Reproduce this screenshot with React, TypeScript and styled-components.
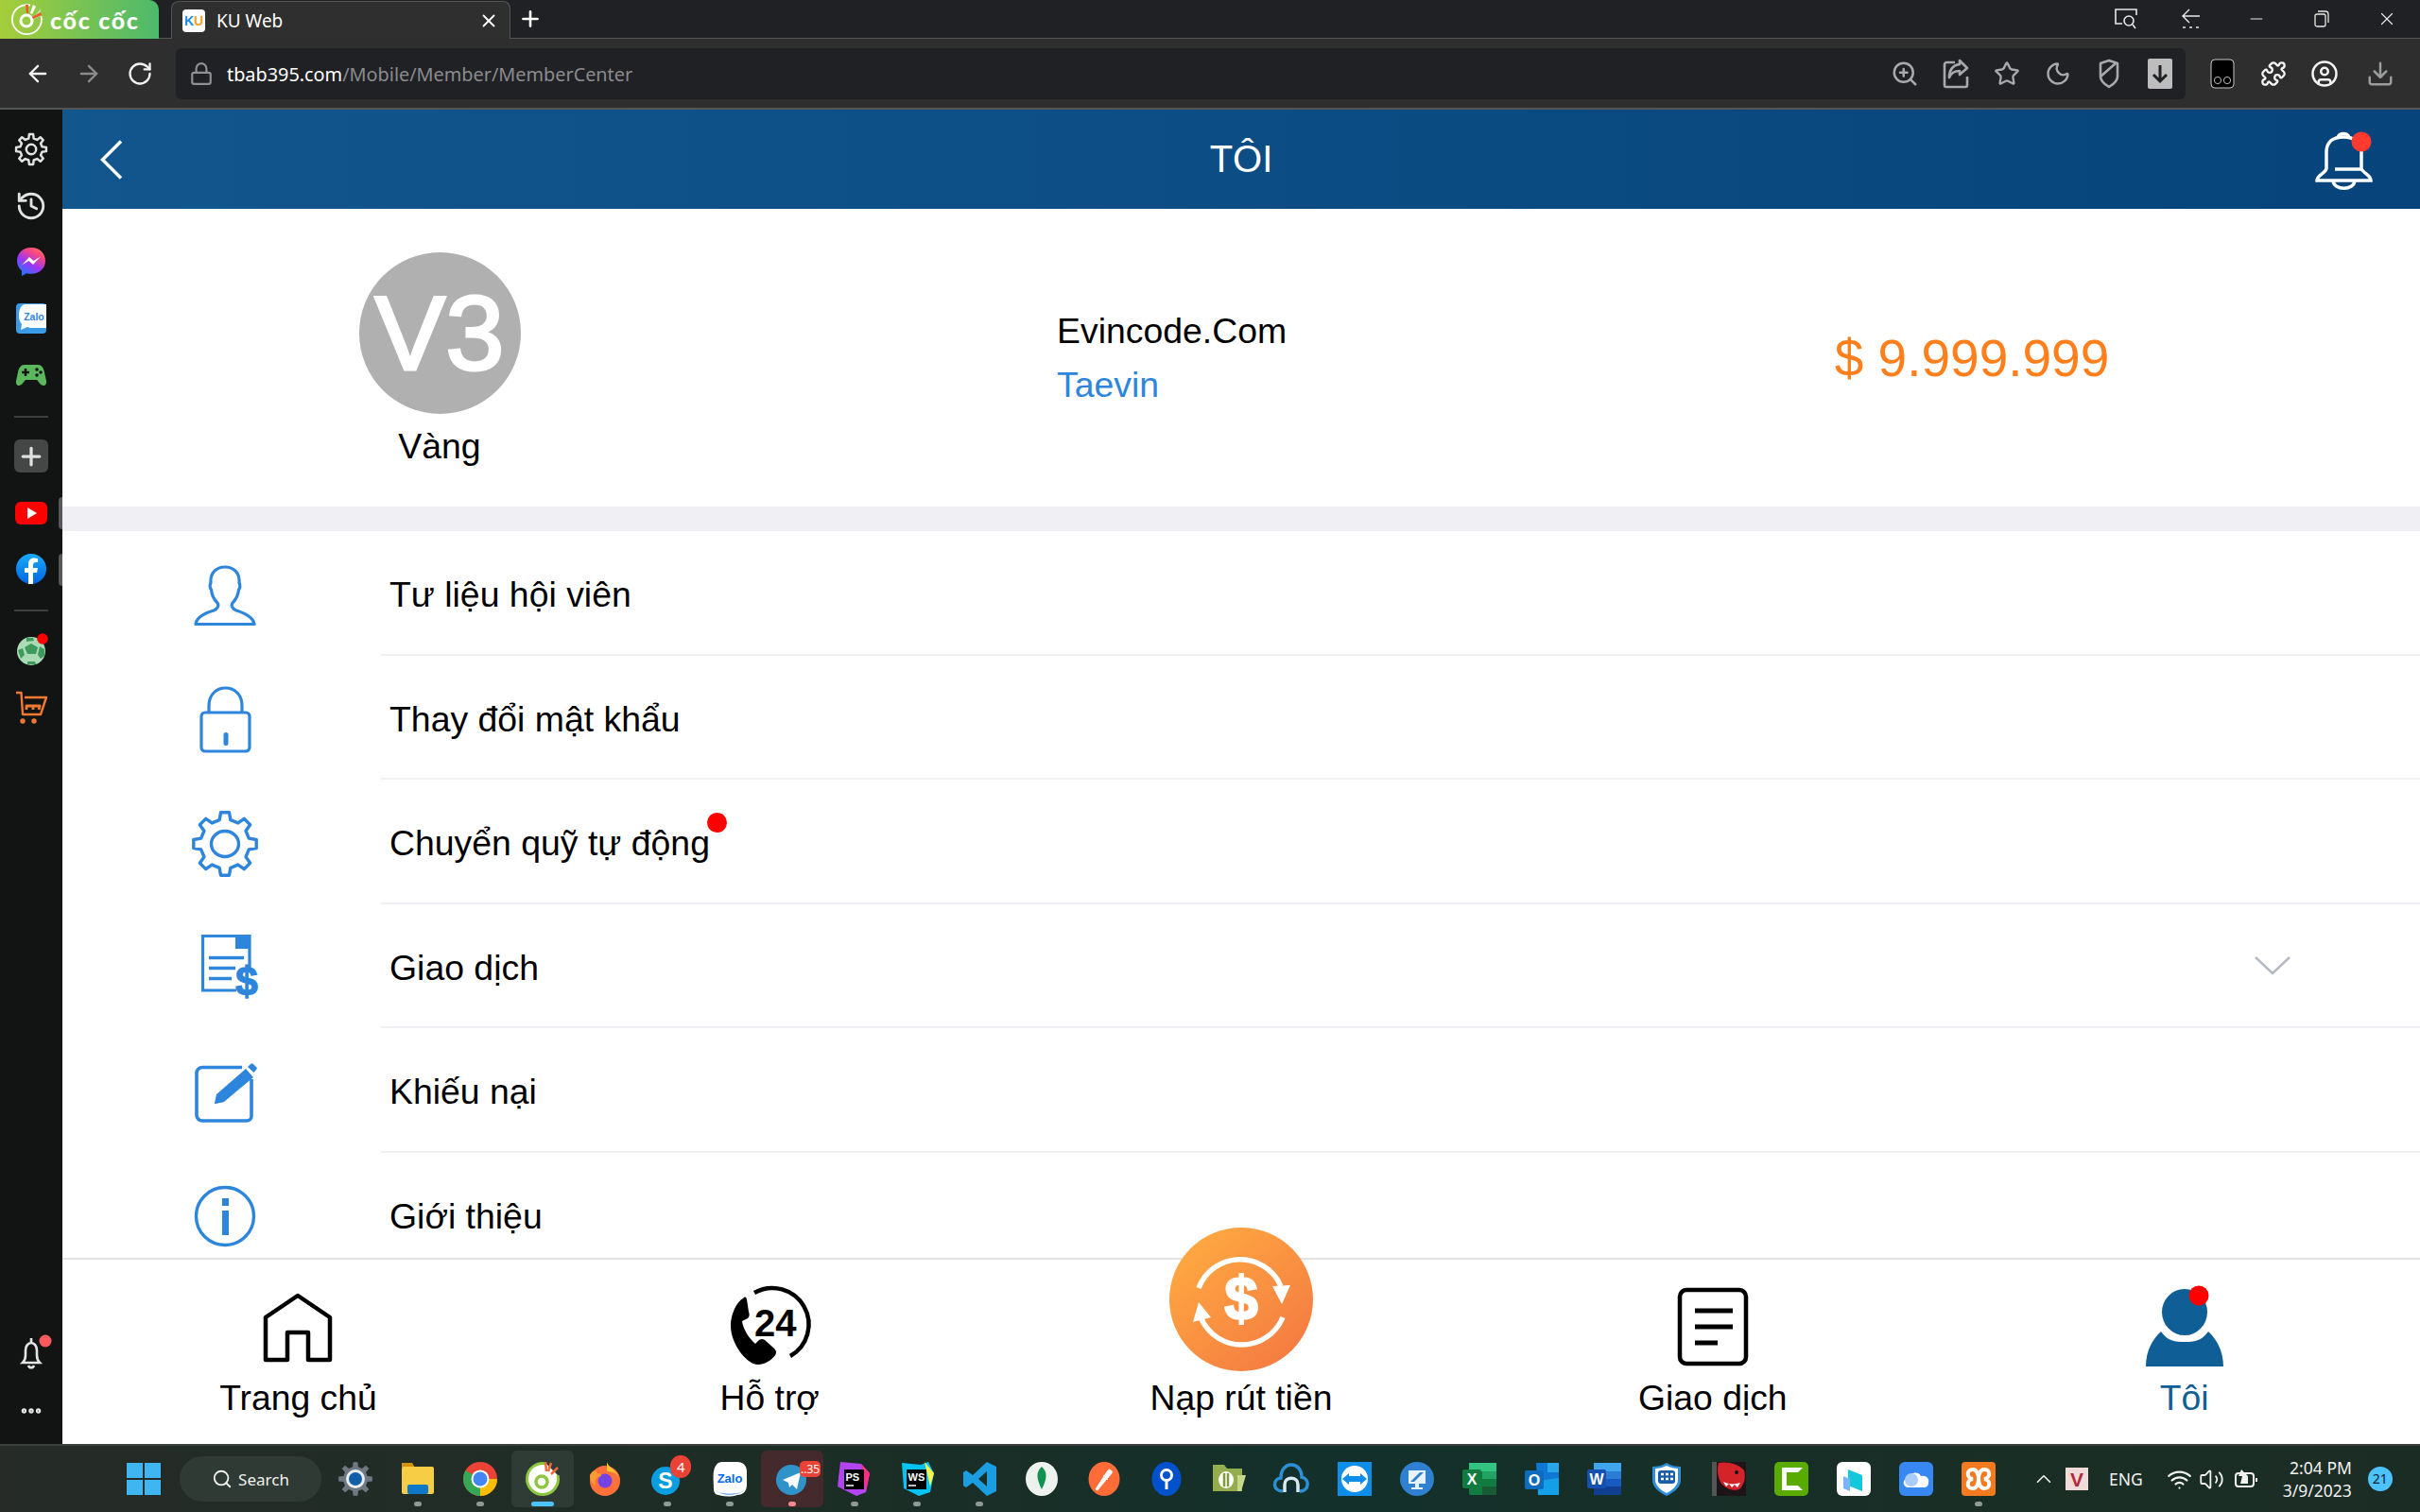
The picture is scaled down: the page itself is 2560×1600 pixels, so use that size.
import React from 'react';
import styled, { createGlobalStyle } from 'styled-components';
import {
  ArrowLeft, ArrowRight, RotateCw, Lock, ZoomIn, Star, Moon, Puzzle, CircleUser, Download, X, Plus, Minus,
  ChevronUp, History, Wifi, Volume2, Search, Ellipsis,
} from 'lucide-react';

const BLUE = '#2e85dc';
const SANS = '"Liberation Sans", Arial, sans-serif';
const UI = '"Noto Sans", "Open Sans", sans-serif';

const Global = createGlobalStyle`
  html, body { margin: 0; padding: 0; width: 2560px; height: 1600px; overflow: hidden; background: #202124; }
  #root { width: 2560px; height: 1600px; }
  * { box-sizing: border-box; }
`;

const Page = styled.div`
  width: 2560px; height: 1600px; display: flex; flex-direction: column; font-family: ${SANS};
`;
const TabStrip = styled.div`
  height: 41px; flex: none; display: flex; align-items: flex-end; background: #202124; border-bottom: 1px solid #555;
`;
const Brand = styled.div`
  width: 168px; height: 41px; margin-bottom: -1px; flex: none; display: flex; align-items: center; gap: 8px; padding-left: 11px;
  background: linear-gradient(90deg, #a6cd3a, #4db96c); border-top-right-radius: 10px;
  color: #fff; font: 900 25px "Lato", sans-serif; letter-spacing: 1.7px; position: relative; z-index: 1;
`;
const Tab = styled.div`
  width: 359px; height: 40px; margin-left: 13px; margin-bottom: -1px; flex: none; display: flex; align-items: center;
  padding: 0 11px; background: #2e2f2e; border: 1px solid #555; border-bottom: none;
  border-radius: 8px 8px 0 0; color: #fff; font: 400 19px ${UI}; position: relative; z-index: 1;
`;
const Favicon = styled.span`
  width: 24px; height: 24px; background: #fff; border-radius: 4px; display: flex; align-items: center; justify-content: center;
  font: 900 14px ${SANS}; margin-right: 12px; color: #1b8be0;
  b { color: #f5a020; }
`;
const TabTitle = styled.span` flex: 1; `;
const NewTab = styled.span` margin-left: 8px; color: #fff; display: flex; align-self: center; `;
const WindowButtons = styled.div` margin-left: auto; display: flex; align-self: center; `;
const WinCell = styled.span`
  width: 69.2px; display: flex; justify-content: center; align-items: center; color: #e8e8e8;
`;
const Toolbar = styled.div`
  height: 75px; flex: none; display: flex; align-items: center; padding: 1px 0 0 13px; background: #2d2e2d; border-bottom: 2px solid #555;
`;
const NavCell = styled.span<{ $dim?: boolean }>`
  width: 54px; display: flex; justify-content: center; align-items: center; color: ${p => (p.$dim ? '#8b8b8b' : '#f1f1f1')};
`;
const Omnibox = styled.div`
  width: 2126px; height: 54px; margin-left: 11px; display: flex; align-items: center; padding-left: 14px;
  background: #202124; border-radius: 6px; color: #8f9092;
`;
const Url = styled.span`
  margin-left: 14px; font: 400 19.85px ${UI}; color: #8a8b8d;
  b { font-weight: 400; color: #fff; }
`;
const OmniIcons = styled.div` margin-left: auto; display: flex; color: #a8a9aa; `;
const OmniCell = styled.span` width: 54px; display: flex; justify-content: center; align-items: center; `;
const ExtIcons = styled.div` margin-left: 12px; display: flex; color: #f4f4f4; `;
const ExtDownload = styled(OmniCell)` color: #9b9c9c; margin-left: 5px; `;

const Main = styled.div` flex: 1; min-height: 0; display: flex; `;
const Sidebar = styled.aside`
  width: 66px; flex: none; display: flex; flex-direction: column; padding-top: 12px; padding-bottom: 5px; background: #121414;
`;
const SideCell = styled.div`
  height: 59.8px; flex: none; display: flex; align-items: center; justify-content: center; position: relative; color: #e2e2e2;
`;
const SideDivider = styled.div<{ $after: number }>`
  height: 2px; width: 36px; flex: none; align-self: center; background: #3d3f3f; margin-top: 13px; margin-bottom: ${p => p.$after}px;
`;
const SideSpacer = styled.div` flex: 1; `;
const EdgeTab = styled.span`
  position: absolute; right: 0; top: 13px; width: 4px; height: 34px; background: #565859; border-radius: 4px 0 0 4px;
`;
const PlusBox = styled.span`
  width: 36px; height: 35px; border-radius: 6px; background: #454747; display: flex; align-items: center; justify-content: center; color: #e0e0e0;
`;

const Content = styled.main` flex: 1; min-width: 0; display: flex; flex-direction: column; background: #fff; `;
const Header = styled.header`
  height: 105px; flex: none; display: grid; grid-template-columns: 1fr auto 1fr; align-items: center; padding: 0 50px;
  background: linear-gradient(90deg, #11568d, #06447b); color: #fff;
`;
const BackButton = styled.span` display: flex; margin-left: -10px; `;
const Title = styled.h1` margin: 0; font: 400 40px ${SANS}; `;
const HeaderBell = styled.span` justify-self: end; display: flex; `;

const Scroller = styled.div` flex: 1; min-height: 0; overflow: hidden; `;
const Profile = styled.section`
  height: 315px; display: grid; grid-template-columns: 798px 748px 1fr; align-items: center;
  border-bottom: 26px solid #efeff4; box-sizing: content-box;
`;
const LevelColumn = styled.div` display: flex; flex-direction: column; align-items: center; gap: 13px; height: 315px; padding-top: 46px; `;
const Badge = styled.div`
  width: 171px; height: 171px; border-radius: 50%; background: #b0b0b0; color: #fff; font: 400 112px/171px ${SANS}; text-align: center;
  -webkit-text-stroke: 3px #fff;
`;
const LevelName = styled.div` font-size: 37.4px; line-height: 42px; color: #000; `;
const UserColumn = styled.div` padding-left: 254px; padding-bottom: 0; font-size: 37.4px; line-height: 57px; color: #000; `;
const UserNick = styled.div` color: ${BLUE}; `;
const Balance = styled.div` text-align: center; padding-top: 0; color: #ff7f1c; font-size: 55px; `;

const Row = styled.div` height: 131.5px; display: flex; `;
const RowIcon = styled.div` width: 337px; flex: none; display: flex; align-items: center; padding: 4px 0 0 136px; `;
const RowBody = styled.div`
  flex: 1; display: flex; align-items: center; justify-content: space-between; padding: 6px 137px 0 9px;
  border-bottom: 2px solid #efeff4; font-size: 37.4px; color: #000;
`;
const RowLabel = styled.span` position: relative; `;
const RedDot = styled.span`
  position: absolute; right: -18px; top: -11px; width: 21px; height: 21px; border-radius: 50%; background: #f00;
`;
const RowChevron = styled.span` display: flex; color: #b5bac2; margin-top: -4px; `;

const BottomNav = styled.nav`
  height: 197px; flex: none; display: flex; border-top: 2px solid #e2e2e2; background: #fff; position: relative; z-index: 2;
`;
const NavItem = styled.div<{ $active?: boolean }>`
  flex: 1; min-width: 0; display: flex; flex-direction: column; align-items: center; justify-content: flex-end; padding-bottom: 26px;
  font-size: 37.3px; line-height: 46px; color: ${p => (p.$active ? '#0f5f96' : '#000')};
`;
const NavIcon = styled.div<{ $gap?: number }>` display: flex; margin-bottom: ${p => p.$gap ?? 7}px; `;

const Taskbar = styled.footer`
  height: 72px; flex: none; display: flex; align-items: center; padding-left: 118px; border-top: 2px solid #3b403e;
  background: linear-gradient(90deg, #262b27 0%, #1d2d25 30%, #13302a 55%, #1a2e25 85%, #1b2c24 100%);
  color: #fff; font-family: ${UI};
`;
const StartCell = styled.div` width: 67px; display: flex; justify-content: center; `;
const SearchPill = styled.div`
  width: 150px; height: 48px; margin-left: 5px; border-radius: 24px; background: #2f3a34; display: flex; align-items: center; justify-content: center; gap: 6px; font-size: 17px; color: #f0f0f0;
`;
const TaskIcons = styled.div` margin-left: 3px; display: flex; `;
const TaskCell = styled.div<{ $state?: 'active' | 'alert' }>`
  width: 66.04px; height: 60px; display: flex; align-items: center; justify-content: center; position: relative; border-radius: 6px;
  background: ${p => (p.$state === 'active' ? 'rgba(255,255,255,.07)' : p.$state === 'alert' ? '#442a2c' : 'transparent')};
`;
const TaskDot = styled.span<{ $color?: string; $wide?: boolean }>`
  position: absolute; bottom: 1px; left: 50%; transform: translateX(-50%); height: 5px; border-radius: 3px;
  width: ${p => (p.$wide ? '24px' : '8px')}; background: ${p => p.$color ?? '#8f9a95'};
`;
const CountBadge = styled.span<{ $wide?: boolean }>`
  position: absolute; top: ${p => (p.$wide ? '11px' : '5px')}; right: ${p => (p.$wide ? '3px' : '8px')};
  min-width: 22px; height: ${p => (p.$wide ? '17px' : '24px')}; padding: 0 1px; border-radius: ${p => (p.$wide ? '5px' : '12px')};
  background: #ea4335; color: #fff; font: 400 ${p => (p.$wide ? '12px' : '15px')}/${p => (p.$wide ? '17px' : '24px')} ${UI}; text-align: center;
`;
const Tray = styled.div<{ $w: number; $ml?: number }>`
  width: ${p => p.$w}px; margin-left: ${p => p.$ml ?? 0}px; flex: none; display: flex; align-items: center; justify-content: center; color: #f2f2f2; font-size: 17.5px;
`;
const Clock = styled.div`
  width: 93px; flex: none; text-align: right; font-size: 17.5px; line-height: 24px; color: #f2f2f2;
`;
const NotifyBadge = styled.div`
  width: 26px; height: 26px; margin-left: 17px; flex: none; border-radius: 50%; background: #4cc2ff; color: #10202a; font-size: 14px; line-height: 26px; text-align: center;
`;

/* ---------- drawings ---------- */
const gearPath = (c: number, ro: number, ri: number, teeth: number) => {
  const pts: string[] = [];
  const step = (Math.PI * 2) / teeth;
  for (let i = 0; i < teeth; i++) {
    const a = i * step - Math.PI / 2;
    const w = step * 0.2;
    const p = (r: number, t: number) => `${(c + r * Math.cos(t)).toFixed(2)} ${(c + r * Math.sin(t)).toFixed(2)}`;
    pts.push(p(ri, a - w * 1.45), p(ro, a - w * 0.85), p(ro, a + w * 0.85), p(ri, a + w * 1.45));
  }
  return `M${pts.join('L')}Z`;
};

const Svg = styled.svg` display: block; overflow: visible; flex: none; `;

const CocLogo = () => (
  <Svg width="34" height="34" viewBox="0 0 34 34">
    <path d="M21 1.500A15.500 15.500 0 1 0 32.500 13" fill="none" stroke="#fff" strokeWidth="1.800" />
    <path d="M32 5L22 18 32 13z" fill="#e4efc8" opacity=".6" />
    <circle cx="17" cy="18" r="6" fill="none" stroke="#fff" strokeWidth="3" />
    <path d="M16 1h3v9h-2z" fill="#ef5a2a" />
    <path d="M24 1l3 2-4 8-2-1z" fill="#fff" />
    <path d="M32 9l1 3-9 4-1-2z" fill="#ef5a2a" />
  </Svg>
);

const ShareIcon = () => (
  <Svg width="28" height="32" viewBox="0 0 28 32" fill="none" stroke="currentColor" strokeWidth="2.6" strokeLinejoin="round">
    <path d="M13 4H4a2.5 2.5 0 0 0-2 2v22a2 2 0 0 0 2 2h20a2 2 0 0 0 2-2v-9" />
    <path d="M18 2l8 8-8 7v-4c-6 0-9 2-11 7 0-8 4-13 11-14z" />
  </Svg>
);
const ShieldIcon = () => (
  <Svg width="22" height="32" viewBox="0 0 22 32" fill="none" stroke="currentColor" strokeWidth="2.6" strokeLinejoin="round">
    <path d="M11 2l9 3v14c0 5-4 8-9 11-5-3-9-6-9-11V5z" />
    <path d="M2 19L18 5" />
  </Svg>
);
const DownloadBox = () => (
  <Svg width="26" height="32" viewBox="0 0 26 32">
    <rect width="26" height="32" rx="2" fill="#bdbdbd" />
    <path d="M13 7v17M6 17l7 7 7-7" fill="none" stroke="#202124" strokeWidth="3" />
  </Svg>
);
const MaskIcon = () => (
  <Svg width="26" height="32" viewBox="0 0 26 32">
    <rect x="1" y="1" width="24" height="30" rx="4" fill="#000" stroke="#c8c8c8" />
    <circle cx="8" cy="23" r="3.6" fill="none" stroke="#bbb" />
    <circle cx="18" cy="23" r="3.6" fill="none" stroke="#bbb" />
  </Svg>
);
const ScreenSearch = () => (
  <Svg width="26" height="24" viewBox="0 0 26 24" fill="none" stroke="currentColor" strokeWidth="1.6">
    <path d="M9 17H2V2h22v6" />
    <circle cx="16" cy="14" r="5" />
    <path d="M20 18l3 4" />
  </Svg>
);
const BackList = () => (
  <Svg width="22" height="22" viewBox="0 0 22 22" fill="none" stroke="currentColor" strokeWidth="1.4">
    <path d="M20 8H2M9 1L2 8l7 7" />
    <path d="M2 20h3M9 20h3M16 20h3" />
  </Svg>
);
const Restore = () => (
  <Svg width="16" height="18" viewBox="0 0 16 18" fill="none" stroke="currentColor" strokeWidth="1.3">
    <rect x="1" y="4" width="11" height="13" rx="2" />
    <path d="M4 1h8a3 3 0 0 1 3 3v9" />
  </Svg>
);

const GearLine = () => (
  <Svg width="34" height="34" viewBox="0 0 36 36" fill="none" stroke="#e2e2e2" strokeWidth="2.6" strokeLinejoin="round">
    <path d={gearPath(18, 17, 12.5, 8)} />
    <circle cx="18" cy="18" r="5.5" />
  </Svg>
);
const Messenger = () => (
  <Svg width="32" height="32" viewBox="0 0 32 32">
    <defs>
      <linearGradient id="msg" x1="0.15" y1="1" x2="0.75" y2="0">
        <stop offset="0" stopColor="#0a84ff" /><stop offset=".45" stopColor="#9d35f5" /><stop offset=".8" stopColor="#f9477f" /><stop offset="1" stopColor="#ff7061" />
      </linearGradient>
    </defs>
    <path d="M16 1C7 1 1 7 1 15c0 4.500 2 8 5 10.500V31l5-2.800c1.600.4 3.200.6 5 .6 9 0 15-6 15-13.800S25 1 16 1z" fill="url(#msg)" />
    <path d="M6 19.500l8-8.500 4.500 4 7.500-4.500-8 8.500-4.500-4z" fill="#fff" />
  </Svg>
);
const SideZalo = () => (
  <Svg width="32" height="32" viewBox="0 0 32 32">
    <rect width="32" height="32" rx="4" fill="#3b9be4" />
    <path d="M32 1H10C5 1 3 7 3 13c0 4 1 7 3 9l-1 6 7-3c2 1 4 1 6 1h14z" fill="#fff" />
    <text x="19" y="17.500" textAnchor="middle" fontFamily={SANS} fontWeight="700" fontSize="10.500" fill="#2f86d9">Zalo</text>
  </Svg>
);
const GamePad = () => (
  <Svg width="32" height="24" viewBox="0 0 32 24">
    <path d="M9 1h14c4 0 6 3 7 8l2 9c.5 3-1 5-3 5-3 0-5-4-7-6H10c-2 2-4 6-7 6-2 0-3.500-2-3-5l2-9c1-5 3-8 7-8z" fill="#5cb85c" />
    <path d="M6 9h8M10 5v8" stroke="#121414" strokeWidth="2.500" />
    <circle cx="22" cy="6" r="1.800" fill="#121414" /><circle cx="26" cy="9" r="1.800" fill="#121414" /><circle cx="22" cy="12" r="1.800" fill="#121414" />
  </Svg>
);
const YouTube = () => (
  <Svg width="34" height="24" viewBox="0 0 34 24">
    <rect width="34" height="24" rx="6" fill="#f00" />
    <path d="M13 6l10 6-10 6z" fill="#fff" />
  </Svg>
);
const Facebook = () => (
  <Svg width="32" height="32" viewBox="0 0 32 32">
    <defs><linearGradient id="fb" x1="0" y1="0" x2="0" y2="1"><stop offset="0" stopColor="#18acfe" /><stop offset="1" stopColor="#0163e0" /></linearGradient></defs>
    <circle cx="16" cy="16" r="16" fill="url(#fb)" />
    <path d="M18 32V20h4l1-5h-5v-3c0-2 1-3 3-3h2V5c-1 0-3-.500-4-.500-4 0-6 2.500-6 6.500v4H9v5h4v12z" fill="#fff" />
  </Svg>
);
const Football = () => (
  <Svg width="34" height="34" viewBox="0 0 34 34">
    <circle cx="17" cy="18" r="15" fill="#a9dcb4" />
    <path d="M17 10l7 4-2 7h-9l-3-7zM3 17l5-2 2 7-4 4zM26 13l5 3 0 7-4 3-3-4zM12 4l7 0 1 3-8 1zM13 29l8 0 1 3-9 0z" fill="#3f9a5e" />
    <circle cx="29" cy="5" r="5.800" fill="#f00" />
  </Svg>
);
const Cart = () => (
  <Svg width="34" height="36" viewBox="0 0 34 36" fill="none" stroke="#f27a30" strokeWidth="2.400" strokeLinejoin="round">
    <path d="M1 3h5.500l1.500 23h19L33 8H10" />
    <path d="M12 21v-4h14l-1 4M19 17v4" strokeWidth="2.800" />
    <circle cx="8" cy="33" r="1.500" fill="#f27a30" /><circle cx="20" cy="33" r="1.500" fill="#f27a30" />
  </Svg>
);
const SideBell = () => (
  <Svg width="34" height="40" viewBox="0 0 34 40" fill="none" stroke="#e4e4e4" strokeWidth="2.600">
    <g transform="translate(4 0)">
      <path d="M4 29h18c-2-2-3-4-3-8v-5c0-5-3-8-6-8s-6 3-6 8v5c0 4-1 6-3 8z" />
      <path d="M13 3v4M10 32c1 3 5 3 6 0" />
      <circle cx="28" cy="6" r="6.500" fill="#ff5a5f" stroke="none" />
    </g>
  </Svg>
);

const PersonIcon = () => (
  <Svg width="72" height="72" viewBox="0 0 72 72" fill="none" stroke={BLUE} strokeWidth="3.200" strokeLinejoin="round">
    <path d="M5 66.500C6 59 14 55 24 52c4-1.500 6-5 4-8-4-4-6-8-6.500-14-2-2-1.500-6-.5-7C20 12 27 6 36 6s16 6 15 17c1 1 1.500 5-.5 7-.5 6-2.500 10-6.500 14-2 3 0 6.500 4 8 10 3 18 7 19 14.500z" />
  </Svg>
);
const LockIcon = () => (
  <Svg width="72" height="72" viewBox="0 0 72 72" fill="none" stroke={BLUE} strokeWidth="3.200">
    <rect x="11" y="29" width="51" height="41" rx="4" />
    <path d="M19 29v-7C19 10 27 3 36.500 3S54 10 54 22v7" />
    <rect x="34.500" y="50" width="5" height="14" rx="2.500" fill={BLUE} stroke="none" />
  </Svg>
);
const GearIcon = () => (
  <Svg width="72" height="72" viewBox="0 0 72 72" fill="none" stroke={BLUE} strokeWidth="3.400" strokeLinejoin="round">
    <path d={gearPath(36, 33.500, 26, 8)} />
    <ellipse cx="36" cy="36" rx="14.500" ry="13.500" />
  </Svg>
);
const MoneyDocIcon = () => (
  <Svg width="72" height="72" viewBox="0 0 72 72">
    <path d="M48 60H12.500V2.500H62V36" fill="none" stroke={BLUE} strokeWidth="3.200" />
    <path d="M47 1h16v15H47z" fill={BLUE} />
    <path d="M19 25.500h37M19 36.500h28M19 47.500h24" stroke={BLUE} strokeWidth="3.500" />
    <text x="59" y="65" textAnchor="middle" fontFamily={SANS} fontWeight="700" fontSize="42" fill={BLUE} stroke={BLUE} strokeWidth="1.400">$</text>
  </Svg>
);
const EditIcon = () => (
  <Svg width="72" height="72" viewBox="0 0 72 72" fill="none" stroke={BLUE} strokeWidth="3.600">
    <path d="M54 9.500H12a6 6 0 0 0-6 6V60a6 6 0 0 0 6 6h47a5 5 0 0 0 5-5V22" />
    <path d="M25 48l2-10L58 11l8 9-31 26z" fill={BLUE} stroke="none" />
    <path d="M60 9l3-3c1-1 2-1 3 0l3 3c1 1 1 2 0 3l-2.500 3z" fill={BLUE} stroke="none" />
    <path d="M25 48l2.500-9 7 7z" fill={BLUE} stroke="none" />
  </Svg>
);
const InfoIcon = () => (
  <Svg width="72" height="72" viewBox="0 0 72 72">
    <circle cx="36" cy="36" r="30.500" fill="none" stroke={BLUE} strokeWidth="3.400" />
    <path d="M33 17h7v8h-7zM33 30h7v26h-7z" fill={BLUE} />
  </Svg>
);

const HomeIcon = () => (
  <Svg width="84" height="84" viewBox="0 0 84 84" fill="none" stroke="#000" strokeWidth="4.500" strokeLinejoin="round">
    <path d="M42 9L8 32v45h23V48h22v29h23V32z" />
  </Svg>
);
const Support = () => (
  <Svg width="84" height="84" viewBox="0 0 84 84">
    <path d="M26 6A38 38 0 1 1 64 73" fill="none" stroke="#000" strokeWidth="4.500" />
    <path d="M14 12C8 15 1 28 1 41c0 17 13 35 24 40 7 3 17-1 23-9 2-3 1-5-2-8l-9-8c-3-2-5-1-7 1l-3 3c-7-6-13-16-14-24l6-3c2-2 2-4 1-7l-2-13c-1-3-2-3-4-1z" fill="#000" />
    <text x="26" y="52" fontFamily={SANS} fontWeight="700" fontSize="40" fill="#000">24</text>
  </Svg>
);
const ExchangeIcon = () => (
  <Svg width="152" height="152" viewBox="0 0 152 152">
    <defs>
      <linearGradient id="ex" x1="0.1" y1="0.05" x2="0.9" y2="0.95">
        <stop offset="0" stopColor="#ffab41" /><stop offset="1" stopColor="#f47942" />
      </linearGradient>
    </defs>
    <circle cx="76" cy="76" r="76" fill="url(#ex)" />
    <g fill="none" stroke="#fff" strokeWidth="5.500">
      <path d="M31 64A47 47 0 0 1 118 62" />
      <path d="M120 95A47 47 0 0 1 34 97" />
    </g>
    <path d="M109 62l19-1-9 20zM31 79l-6 21 19-5z" fill="#fff" />
    <text x="76" y="97" textAnchor="middle" fontFamily={SANS} fontWeight="700" fontSize="64" fill="#fff" stroke="#fff" strokeWidth="2">$</text>
  </Svg>
);
const DocIcon = () => (
  <Svg width="84" height="84" viewBox="0 0 84 84">
    <rect x="7" y="3" width="70" height="78" rx="7" fill="none" stroke="#000" strokeWidth="4.500" />
    <path d="M23 25h40M23 42h40M23 59h24" stroke="#000" strokeWidth="5" />
  </Svg>
);
const MeIcon = () => (
  <Svg width="84" height="84" viewBox="0 0 84 84">
    <ellipse cx="42" cy="26.500" rx="24" ry="24.500" fill="#0f5f96" />
    <path d="M1 84C1 68 8 55 17 47c7 10 15 11 25 11s18-1 25-11c9 8 16 21 16 37z" fill="#0f5f96" />
    <circle cx="57" cy="9" r="10.500" fill="#f00" />
  </Svg>
);
const HeaderBellIcon = () => (
  <Svg width="61" height="63" viewBox="0 0 61 63" fill="none" stroke="#fff" strokeWidth="3.500">
    <path d="M2 54h57c0-6-9-8-10-13V24C49 13 41 8 30 8S12 13 12 24v17c0 5-10 7-10 13z" />
    <path d="M24 9c0-6 12-6 12 0M19 54c1 11 22 11 23 0M21 42h28" />
    <circle cx="49" cy="13" r="10.500" fill="#ff3b30" stroke="none" />
  </Svg>
);

/* taskbar icons */
const T = ({ children }: { children: React.ReactNode }) => <Svg width="36" height="36" viewBox="0 0 36 36">{children}</Svg>;
const WinLogo = () => (
  <T>
    <path d="M0 1h17v16H0zM19 1h17v16H19zM0 19h17v16H0zM19 19h17v16H19z" fill="#3fb6f0" />
  </T>
);
const tIcons: Record<string, React.ReactNode> = {
  settings: <T><path d={gearPath(18, 18, 13, 8)} fill="#6f7882" /><circle cx="18" cy="18" r="10" fill="#e9eef2" /><circle cx="18" cy="18" r="7" fill="#125fa8" /></T>,
  folder: <T><path d="M1 1h11l3 5H1z" fill="#d2930f" /><rect x="1" y="5" width="34" height="29" rx="2" fill="#f6cd45" /><rect x="7" y="24" width="22" height="10" rx="2" fill="#0f78c8" /></T>,
  chrome: <T><circle cx="18" cy="18" r="18" fill="#ea4335" /><path d="M18 18L2.500 9A18 18 0 0 0 18 36z" fill="#34a853" /><path d="M18 18h18A18 18 0 0 1 18 36z" fill="#fbbc04" /><circle cx="18" cy="18" r="9.500" fill="#fff" /><circle cx="18" cy="18" r="7.500" fill="#4285f4" /></T>,
  coccoc: <T><path d="M22 2A16.500 16.500 0 1 0 34 14" fill="#fff" stroke="#8dc63f" strokeWidth="3" /><circle cx="17" cy="21" r="6" fill="none" stroke="#8dc63f" strokeWidth="3.500" /><path d="M21 0l1 10M27 1l-3 9M34 6l-7 7" stroke="#f26a3a" strokeWidth="2.500" /></T>,
  firefox: <T><circle cx="18" cy="20" r="16" fill="#ff7139" /><path d="M20 0c1 6 12 8 14 20 0-6-6-10-14-10z" fill="#ffc233" /><circle cx="18" cy="20" r="7.500" fill="#7542e5" /><path d="M2 14c3-6 6-6 8-2 3 0 4 1 4 3-5 1-8 4-6 10-4-2-6-6-6-11z" fill="#ff9b30" /></T>,
  skype: <T><circle cx="16" cy="20" r="15" fill="#0a9de0" /><text x="16" y="28" textAnchor="middle" fontFamily={SANS} fontWeight="700" fontSize="23" fill="#fff">S</text></T>,
  zalo: <T><path d="M10 0h16c6 0 10 4 10 10v14c0 7-4 11-10 11-6 2-14 2-20 0-3 0-5-3-5-6 0-7-1-14 0-19C2 4 5 0 10 0z" fill="#fff" /><path d="M3 30c6 6 24 6 30 0-3 5-27 5-30 0z" fill="#0068ff" /><text x="18" y="22" textAnchor="middle" fontFamily={SANS} fontWeight="700" fontSize="13" fill="#0068ff">Zalo</text></T>,
  telegram: <T><circle cx="17" cy="19" r="16" fill="#2f93c9" /><path d="M8 19l19-8-4 18-5-5-3 3-1-5z" fill="#fff" /></T>,
  ps: <T><path d="M3 0l22 2 9 10-4 20-10 4L0 26z" fill="#b345f1" /><path d="M25 2l9 10-4 20z" fill="#ff2f7e" /><rect x="7" y="8" width="21" height="21" fill="#000" /><text x="8.500" y="20" fontFamily={SANS} fontWeight="700" fontSize="11" fill="#fff">PS</text><path d="M9 25h8" stroke="#fff" strokeWidth="1.500" /></T>,
  ws: <T><path d="M2 1l20 2 8-3 6 12-4 20-12 4-16-8z" fill="#07c3f2" /><path d="M26 0l10 12-4 14z" fill="#fcf84a" /><rect x="7" y="8" width="21" height="21" fill="#000" /><text x="8.500" y="20" fontFamily={SANS} fontWeight="700" fontSize="11" fill="#fff">WS</text><path d="M9 25h8" stroke="#fff" strokeWidth="1.500" /></T>,
  vscode: <T><path d="M26 0l10 5v26l-10 5-15-14-7 5-3-2v-14l3-2 7 5zM26 10l-9 8 9 8z" fill="#1b9de2" /></T>,
  mongo: <T><ellipse cx="18" cy="18" rx="17" ry="18" fill="#eef2ee" /><path d="M18 5c5 5 7 10 0 24-7-14-5-19 0-24z" fill="#12924f" /></T>,
  postman: <T><ellipse cx="18" cy="18" rx="16.500" ry="18" fill="#ff6c37" /><path d="M9 29l9-14 4-6c2-2 5 0 4 3l-6 7-9 11zM17 14l5 5" stroke="#fff" fill="#fff" strokeWidth="1" /></T>,
  sourcetree: <T><ellipse cx="18" cy="18" rx="15.500" ry="18" fill="#0052cc" /><circle cx="18" cy="14" r="5.500" fill="none" stroke="#fff" strokeWidth="3" /><path d="M18 19v10" stroke="#fff" strokeWidth="3" /></T>,
  greenfolder: <T><path d="M1 3h12l3 4h16v24H1z" fill="#94ad4d" /><path d="M27 14h9l-5 17h-4z" fill="#c7d88a" /><ellipse cx="15" cy="19" rx="8" ry="9" fill="#fff" /><path d="M13 12v14M17 12v14" stroke="#7f9b3b" strokeWidth="2.500" /></T>,
  tunnel: <T><path d="M9 31c-11 0-11-13-2-14 0-9 5-14 11-14s11 5 11 13c9 2 8 15-2 15" fill="none" stroke="#2c8fd6" strokeWidth="3.500" /><path d="M11 32V24c0-9 14-9 14 0v8" fill="none" stroke="#d8e8f2" strokeWidth="3.500" /><path d="M16 33l1-7h2l1 7z" fill="#0e2c44" /></T>,
  teamviewer: <T><rect width="36" height="36" fill="#0e8ee9" /><circle cx="18" cy="18" r="14" fill="#fff" /><path d="M5 18l7-6v3h12v-3l7 6-7 6v-3H12v3z" fill="#0e8ee9" /></T>,
  remote: <T><ellipse cx="18" cy="18" rx="18" ry="18" fill="#2f80d0" /><rect x="9" y="9" width="18" height="14" fill="#e8f2fb" /><path d="M11 21l10-10h4l-10 10z" fill="#2f80d0" /><path d="M16 23h4v4h4v2H12v-2h4z" fill="#e8f2fb" /></T>,
  excel: <T><rect x="7" y="1" width="29" height="34" rx="2" fill="#107c41" /><path d="M7 1h29v9H7z" fill="#33c481" /><path d="M21 10h15v8H21z" fill="#21a366" /><path d="M21 26h15v9H21z" fill="#185c37" /><rect y="8" width="20" height="20" rx="2" fill="#0f7b3f" /><text x="10" y="24" textAnchor="middle" fontFamily={SANS} fontWeight="700" fontSize="16" fill="#fff">X</text></T>,
  outlook: <T><path d="M12 1h24v34H14z" fill="#0f78d4" /><path d="M24 1h12v10H24z" fill="#28a8ea" /><path d="M14 20l22-3v18H14z" fill="#14a0e6" /><rect y="9" width="20" height="20" rx="2" fill="#0f6cbd" /><text x="10" y="25" textAnchor="middle" fontFamily={SANS} fontWeight="700" fontSize="16" fill="#fff">O</text></T>,
  word: <T><rect x="7" y="1" width="29" height="34" rx="2" fill="#2b7cd3" /><path d="M7 1h29v9H7z" fill="#41a5ee" /><path d="M7 26h29v9H7z" fill="#103f91" /><path d="M7 18h29v8H7z" fill="#185abd" /><rect y="8" width="20" height="20" rx="2" fill="#1550ae" /><text x="10" y="24" textAnchor="middle" fontFamily={SANS} fontWeight="700" fontSize="16" fill="#fff">W</text></T>,
  shield: <T><path d="M18 1c5 3 10 4 15 4v14c0 8-7 13-15 17-8-4-15-9-15-17V5c5 0 10-1 15-4z" fill="#2f8fd8" /><path d="M18 4c4 2 8 3 12 3v12c0 6-6 11-12 14-6-3-12-8-12-14V7c4 0 8-1 12-3z" fill="#fff" /><rect x="9" y="9" width="18" height="14" rx="3" fill="#1a5ea8" /><path d="M12 13h3M17 13h3M22 13h3M12 18h3M17 18h3M22 18h3" stroke="#fff" strokeWidth="2.500" /></T>,
  red: <T><rect width="36" height="36" fill="#1d1517" /><path d="M0 0h5v36H0z" fill="#555" /><path d="M7 1c8-2 22 1 27 8 2 8 0 14-4 19-6 4-14 1-20-5-4-6-5-16-3-22z" fill="#d5232a" /><path d="M12 21l3 5 3-3 3 4 3-3 3 3 3-5c-6 2-12 2-18-1z" fill="#fff" /><circle cx="26" cy="11" r="2" fill="#111" /></T>,
  camtasia: <T><rect width="36" height="36" rx="5" fill="#5aab00" /><path d="M8 6h22l-5 5H13v14h12l5 5H8z" fill="#fff" /></T>,
  flags: <T><rect width="36" height="36" rx="6" fill="#fff" /><path d="M12 8l15 6v17l-15-6z" fill="#14c8dc" /><path d="M7 15l7 3v13l-7-3z" fill="#7bb4f2" /></T>,
  cloud: <T><rect width="36" height="36" rx="6" fill="#3788f3" /><path d="M10 27c-7 0-7-10 0-10 1-6 11-8 13-2 7-1 9 4 8 7 0 3-2 5-5 5z" fill="#fff" /><circle cx="13" cy="19" r="7" fill="#a8cdf8" /></T>,
  xampp: <T><rect width="36" height="36" rx="4" fill="#f47a20" /><path d="M12 8c-7 0-7 9 0 10-7 1-7 10 0 10 4 0 6-5 6-10 0 5 2 10 6 10 7 0 7-9 0-10 7-1 7-10 0-10-4 0-6 5-6 10 0-5-2-10-6-10z" fill="none" stroke="#fff" strokeWidth="4" /></T>,
};
const taskItems: { k: string; dot?: boolean; state?: 'active' | 'alert'; badge?: string }[] = [
  { k: 'settings' }, { k: 'folder', dot: true }, { k: 'chrome', dot: true }, { k: 'coccoc', state: 'active' }, { k: 'firefox' },
  { k: 'skype', dot: true, badge: '4' }, { k: 'zalo', dot: true }, { k: 'telegram', state: 'alert', badge: '..35' }, { k: 'ps', dot: true }, { k: 'ws', dot: true },
  { k: 'vscode', dot: true }, { k: 'mongo' }, { k: 'postman' }, { k: 'sourcetree' }, { k: 'greenfolder' }, { k: 'tunnel' }, { k: 'teamviewer' }, { k: 'remote' },
  { k: 'excel' }, { k: 'outlook' }, { k: 'word' }, { k: 'shield' }, { k: 'red' }, { k: 'camtasia' }, { k: 'flags' }, { k: 'cloud' }, { k: 'xampp', dot: true },
];

const rows: { icon: React.ReactNode; label: string; dot?: boolean; chevron?: boolean }[] = [
  { icon: <PersonIcon />, label: 'Tư liệu hội viên' },
  { icon: <LockIcon />, label: 'Thay đổi mật khẩu' },
  { icon: <GearIcon />, label: 'Chuyển quỹ tự động', dot: true },
  { icon: <MoneyDocIcon />, label: 'Giao dịch', chevron: true },
  { icon: <EditIcon />, label: 'Khiếu nại' },
  { icon: <InfoIcon />, label: 'Giới thiệu' },
];

function ChevronLeftThin() {
  return (
    <Svg width="24" height="42" viewBox="0 0 24 42" fill="none" stroke="#fff" strokeWidth="3.500">
      <path d="M22 1.500L2.500 21 22 40.500" />
    </Svg>
  );
}
function ChevronDownThin() {
  return (
    <Svg width="38" height="22" viewBox="0 0 38 22" fill="none" stroke="currentColor" strokeWidth="2.500">
      <path d="M1 2l18 17L37 2" />
    </Svg>
  );
}
function VBox() {
  return (
    <Svg width="24" height="24" viewBox="0 0 24 24">
      <rect width="24" height="24" fill="#f0dada" />
      <text x="12" y="20" textAnchor="middle" fontFamily={SANS} fontWeight="700" fontSize="21" fill="#b02a37">V</text>
    </Svg>
  );
}
function BatteryIcon() {
  return (
    <Svg width="26" height="24" viewBox="0 0 26 24" fill="none" stroke="#f2f2f2" strokeWidth="2">
      <rect x="2" y="6" width="19" height="14" rx="3" />
      <path d="M24 11v4" />
      <path d="M8 2L5 9h4l-2 8h8v-8z" fill="#f2f2f2" stroke="none" />
    </Svg>
  );
}

export default function App() {
  return (
    <Page>
      <Global />
      <TabStrip>
        <Brand><CocLogo /><span>cốc cốc</span></Brand>
        <Tab>
          <Favicon>K<b>U</b></Favicon>
          <TabTitle>KU Web</TabTitle>
          <X size={22} strokeWidth={2} />
        </Tab>
        <NewTab><Plus size={26} strokeWidth={2.4} /></NewTab>
        <WindowButtons>
          <WinCell><ScreenSearch /></WinCell>
          <WinCell><BackList /></WinCell>
          <WinCell><Minus size={20} strokeWidth={1.4} /></WinCell>
          <WinCell><Restore /></WinCell>
          <WinCell><X size={22} strokeWidth={1.3} /></WinCell>
        </WindowButtons>
      </TabStrip>
      <Toolbar>
        <NavCell><ArrowLeft size={28} strokeWidth={2} /></NavCell>
        <NavCell $dim><ArrowRight size={28} strokeWidth={2} /></NavCell>
        <NavCell><RotateCw size={28} strokeWidth={2} /></NavCell>
        <Omnibox>
          <Lock size={26} strokeWidth={2} />
          <Url><b>tbab395.com</b>/Mobile/Member/MemberCenter</Url>
          <OmniIcons>
            <OmniCell><ZoomIn size={30} strokeWidth={2} /></OmniCell>
            <OmniCell><ShareIcon /></OmniCell>
            <OmniCell><Star size={28} strokeWidth={2} /></OmniCell>
            <OmniCell><Moon size={28} strokeWidth={2} /></OmniCell>
            <OmniCell><ShieldIcon /></OmniCell>
            <OmniCell><DownloadBox /></OmniCell>
          </OmniIcons>
        </Omnibox>
        <ExtIcons>
          <OmniCell><MaskIcon /></OmniCell>
          <OmniCell><Puzzle size={28} strokeWidth={2} /></OmniCell>
          <OmniCell><CircleUser size={30} strokeWidth={2} /></OmniCell>
          <ExtDownload><Download size={30} strokeWidth={2} /></ExtDownload>
        </ExtIcons>
      </Toolbar>
      <Main>
        <Sidebar>
          <SideCell><GearLine /></SideCell>
          <SideCell><History size={34} strokeWidth={2} /></SideCell>
          <SideCell><Messenger /></SideCell>
          <SideCell><SideZalo /></SideCell>
          <SideCell><GamePad /></SideCell>
          <SideDivider $after={11} />
          <SideCell><PlusBox><Plus size={30} strokeWidth={2.6} /></PlusBox></SideCell>
          <SideCell><YouTube /><EdgeTab /></SideCell>
          <SideCell><Facebook /><EdgeTab /></SideCell>
          <SideDivider $after={11} />
          <SideCell><Football /></SideCell>
          <SideCell><Cart /></SideCell>
          <SideSpacer />
          <SideCell><SideBell /></SideCell>
          <SideCell><Ellipsis size={26} strokeWidth={3} /></SideCell>
        </Sidebar>
        <Content>
          <Header>
            <BackButton><ChevronLeftThin /></BackButton>
            <Title>TÔI</Title>
            <HeaderBell><HeaderBellIcon /></HeaderBell>
          </Header>
          <Scroller>
            <Profile>
              <LevelColumn>
                <Badge>V3</Badge>
                <LevelName>Vàng</LevelName>
              </LevelColumn>
              <UserColumn>
                <div>Evincode.Com</div>
                <UserNick>Taevin</UserNick>
              </UserColumn>
              <Balance>$ 9.999.999</Balance>
            </Profile>
            {rows.map(r => (
              <Row key={r.label}>
                <RowIcon>{r.icon}</RowIcon>
                <RowBody>
                  <RowLabel>{r.label}{r.dot && <RedDot />}</RowLabel>
                  {r.chevron && <RowChevron><ChevronDownThin /></RowChevron>}
                </RowBody>
              </Row>
            ))}
          </Scroller>
          <BottomNav>
            <NavItem><NavIcon $gap={10}><HomeIcon /></NavIcon>Trang chủ</NavItem>
            <NavItem><NavIcon $gap={10}><Support /></NavIcon>Hỗ trợ</NavItem>
            <NavItem><NavIcon $gap={5}><ExchangeIcon /></NavIcon>Nạp rút tiền</NavItem>
            <NavItem><NavIcon $gap={10}><DocIcon /></NavIcon>Giao dịch</NavItem>
            <NavItem $active><NavIcon $gap={10}><MeIcon /></NavIcon>Tôi</NavItem>
          </BottomNav>
        </Content>
      </Main>
      <Taskbar>
        <StartCell><WinLogo /></StartCell>
        <SearchPill><Search size={22} strokeWidth={2} />Search</SearchPill>
        <TaskIcons>
          {taskItems.map(t => (
            <TaskCell key={t.k} $state={t.state}>
              {tIcons[t.k]}
              {t.badge && <CountBadge $wide={t.badge.length > 1}>{t.badge}</CountBadge>}
              {t.dot && <TaskDot />}
              {t.state === 'active' && <TaskDot $color="#4cc2ff" $wide />}
              {t.state === 'alert' && <TaskDot $color="#f08a8f" />}
            </TaskCell>
          ))}
        </TaskIcons>
        <Tray $w={36} $ml={18}><ChevronUp size={26} strokeWidth={1.5} /></Tray>
        <Tray $w={34}><VBox /></Tray>
        <Tray $w={70}>ENG</Tray>
        <Tray $w={34} $ml={5}><Wifi size={27} strokeWidth={2} /></Tray>
        <Tray $w={34}><Volume2 size={27} strokeWidth={1.6} /></Tray>
        <Tray $w={38}><BatteryIcon /></Tray>
        <Clock>2:04 PM<br />3/9/2023</Clock>
        <NotifyBadge>21</NotifyBadge>
      </Taskbar>
    </Page>
  );
}
